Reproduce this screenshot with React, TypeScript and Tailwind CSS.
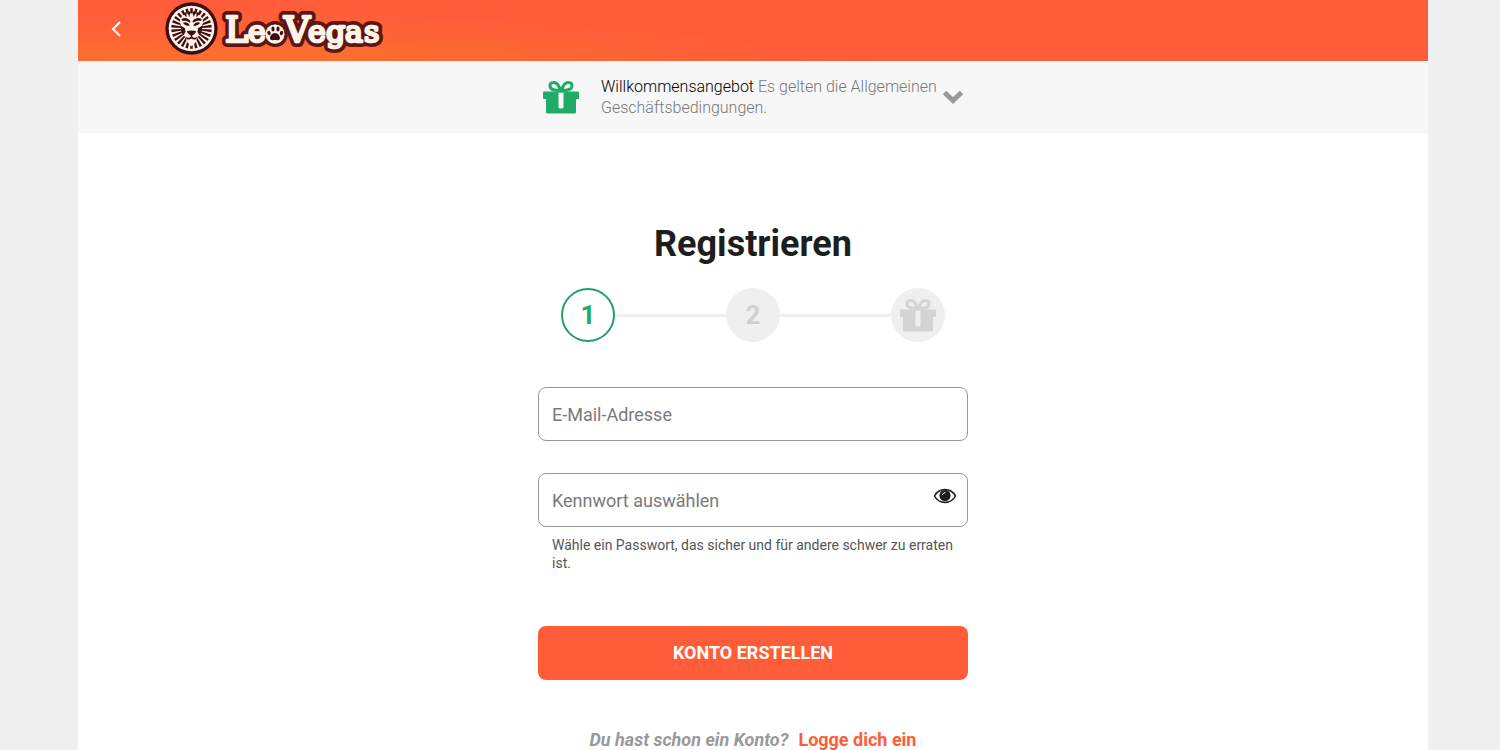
import { useState } from "react";

const RAYS = Array.from({ length: 26 }, (_, i) => (i * 360) / 26);

function LionBadge() {
  return (
    <svg viewBox="0 0 160 160" className="size-[53px] shrink-0" aria-hidden="true">
      <circle cx="80" cy="80" r="79" fill="#3f0d10" />
      <circle cx="80" cy="80" r="69" fill="#fff4ea" />
      {RAYS.map((deg) => (
        <path key={deg} d="M76 19 L84 19 L82.5 50 L77.5 50 Z" fill="#3f0d10" transform={`rotate(${deg} 80 80)`} />
      ))}
      <path
        d="M80 34 C88 37 97 34 104 39 C112 44 116 53 114 65 L107 84 C110 93 107 101 98 106 L92 122 L80 134 L68 122 L62 106 C53 101 50 93 53 84 L46 65 C44 53 48 44 56 39 C63 34 72 37 80 34 Z"
        fill="#fff4ea"
      />
      <g fill="#3f0d10">
        <path d="M50 51 C60 46 70 49 77 58 L75 63 C67 57 60 56 51 57 Z" />
        <path d="M110 51 C100 46 90 49 83 58 L85 63 C93 57 100 56 109 57 Z" />
        <path d="M54 63 C61 59 70 62 75 71 C67 73 59 71 54 63 Z" />
        <path d="M106 63 C99 59 90 62 85 71 C93 73 101 71 106 63 Z" />
        <path d="M66 88 C75 85 85 85 94 88 C93 94 87 98 80 102 C73 98 67 94 66 88 Z" />
        <path d="M78 98 H82 V104 C86 110 93 109 99 104 C97 114 86 116 80 110 C74 116 63 114 61 104 C67 109 74 110 78 104 Z" />
        <path d="M46 70 L60 79 L62 90 L56 101 L50 92 Z" />
        <path d="M114 70 L100 79 L98 90 L104 101 L110 92 Z" />
        <path d="M67 29 L73 46 L78 29 Z M93 29 L87 46 L82 29 Z M54 34 L65 47 L65 30 Z M106 34 L95 47 L95 30 Z" />
      </g>
    </svg>
  );
}

function Wordmark() {
  const letters = (
    <>
      <tspan x="5" fontSize="35">L</tspan>
      <tspan x="28 46">eo</tspan>
      <tspan x="64" fontSize="36">V</tspan>
      <tspan x="88 106 125 144">egas</tspan>
    </>
  );
  return (
    <svg viewBox="0 0 166 52" className="h-[52px] w-[166px] shrink-0" role="img" aria-label="LeoVegas">
      <g fontFamily="'DejaVu Serif', serif" fontSize="30" strokeLinejoin="round">
        <text y="36" fill="#5c1712" stroke="#5c1712" strokeWidth="10">
          {letters}
        </text>
        <text y="36" fill="#fff4ea" stroke="#fff4ea" strokeWidth="2.600" aria-hidden="true">
          {letters}
        </text>
      </g>
      <circle cx="55" cy="28" r="9.500" fill="#fff4ea" />
      <g fill="#3f0d10">
        <ellipse cx="49" cy="27" rx="1.600" ry="2.200" transform="rotate(-25 49 27)" />
        <ellipse cx="53" cy="23" rx="1.600" ry="2.400" />
        <ellipse cx="58" cy="23" rx="1.600" ry="2.400" />
        <ellipse cx="61.500" cy="27" rx="1.600" ry="2.200" transform="rotate(25 61.5 27)" />
        <path d="M55 27 C58 27 60 30 60 32 C60 35 57 34 55 34 C53 34 50 35 50 32 C50 30 52 27 55 27 Z" />
      </g>
    </svg>
  );
}

function GiftIcon({ className = "" }: { className?: string }) {
  return (
    <svg viewBox="0 0 36 33" className={`h-[33px] w-9 ${className}`} aria-hidden="true">
      <path
        d="M17.500 10 C16 4 13 1 10 1.500 C6 2 6 7 10 8.500 C12.500 9.500 15 9 17.500 10 Z M18.500 10 C20 4 23 1 26 1.500 C30 2 30 7 26 8.500 C23.500 9.500 21 9 18.500 10 Z"
        fill="none"
        stroke="currentColor"
        strokeWidth="3"
        strokeLinejoin="round"
      />
      <path
        fillRule="evenodd"
        d="M1 10.500 H35 Q36 10.500 36 11.500 V17 Q36 18 35 18 H33 V31 Q33 32.500 31.500 32.500 H4.500 Q3 32.500 3 31 V18 H1 Q0 18 0 17 V11.500 Q0 10.500 1 10.500 Z M15.500 11.500 V26 Q15.500 27.500 17 27.500 H19 Q20.500 27.500 20.500 26 V11.500 Z"
        fill="currentColor"
      />
    </svg>
  );
}

function EyeIcon() {
  return (
    <svg viewBox="0 0 24 16" className="h-4 w-6" aria-hidden="true">
      <path d="M1.500 8 C6 -0.500 18 -0.500 22.500 8 C18 16.500 6 16.500 1.500 8 Z" fill="none" stroke="#1e1e1e" strokeWidth="1.600" />
      <circle cx="12" cy="7.500" r="5.600" fill="#1e1e1e" />
      <path d="M9.500 6.500 A3 3 0 0 1 12 4.500" fill="none" stroke="#ffffff" strokeWidth="1" strokeLinecap="round" />
    </svg>
  );
}

function Header() {
  return (
    <header className="flex h-[61px] items-start bg-[#ff5c3a] bg-[radial-gradient(ellipse_700px_80px_at_150px_90px,#fb7a2a,#ff5c3a)] pl-7">
      <button type="button" aria-label="Zurück" className="mt-[17px] flex h-6 w-5 items-center justify-center text-white">
        <svg viewBox="0 0 10 16" className="h-4 w-[10px]" fill="none" stroke="currentColor" strokeWidth="2">
          <path d="M9 1 L2 8 L9 15" />
        </svg>
      </button>
      <a href="#" className="mt-[2px] ml-[39px] flex items-start gap-[2px]">
        <LionBadge />
        <span className="mt-1">
          <Wordmark />
        </span>
      </a>
    </header>
  );
}

function OfferBanner() {
  return (
    <section className="flex h-[72px] justify-center bg-[#f7f7f7]">
      <div className="flex w-[430px] items-center pl-[5px]">
        <GiftIcon className="shrink-0 text-[#20ab66]" />
        <p className="ml-[22px] flex-1 text-base leading-[21px] font-light text-[#777777]">
          <span className="text-black">Willkommensangebot</span> Es gelten die Allgemeinen
          Geschäftsbedingungen.
        </p>
        <button type="button" aria-label="Details anzeigen" className="mr-1 text-[#999999]">
          <svg viewBox="0 0 22 14" className="h-[14px] w-[22px]" fill="none" stroke="currentColor" strokeWidth="5">
            <path d="M2.500 2.500 L11 10.500 L19.500 2.500" />
          </svg>
        </button>
      </div>
    </section>
  );
}

function Steps() {
  return (
    <ol className="mt-[22px] flex items-center px-[23px] text-[26px] font-bold">
      <li className="flex size-[54px] items-center justify-center rounded-full border-2 border-[#20a068] text-[#20ab66]">
        1
      </li>
      <li className="h-[3px] flex-1 bg-[#efefef]" aria-hidden="true" />
      <li className="flex size-[54px] items-center justify-center rounded-full bg-[#efefef] text-[#d0d0d0]">2</li>
      <li className="h-[3px] flex-1 bg-[#efefef]" aria-hidden="true" />
      <li className="flex size-[54px] items-center justify-center rounded-full bg-[#efefef] text-[#d4d4d4]">
        <GiftIcon />
      </li>
    </ol>
  );
}

const inputClass =
  "h-[54px] w-full rounded-lg border border-[#999999] bg-white px-[13px] text-lg text-[#1e1e1e] outline-none placeholder:text-[#7a7a7a] focus:border-[#20ab66]";

export default function App() {
  const [email, setEmail] = useState("");
  const [password, setPassword] = useState("");
  const [visible, setVisible] = useState(false);

  return (
    <div className="h-screen overflow-hidden bg-[#f0f0f0] pr-[72px] pl-[78px] font-[Roboto,sans-serif]">
      <div className="min-h-screen bg-white">
        <Header />
        <OfferBanner />

        <main className="mx-auto w-[430px] pt-[90px]">
          <h1 className="text-center text-4xl leading-[43px] font-bold text-[#1e1e1e]">Registrieren</h1>
          <Steps />

          <form className="mt-[45px]" onSubmit={(e) => e.preventDefault()}>
            <input
              type="email"
              aria-label="E-Mail-Adresse"
              placeholder="E-Mail-Adresse"
              value={email}
              onChange={(e) => setEmail(e.target.value)}
              className={inputClass}
            />
            <div className="relative mt-8">
              <input
                type={visible ? "text" : "password"}
                aria-label="Kennwort auswählen"
                aria-describedby="password-hint"
                placeholder="Kennwort auswählen"
                value={password}
                onChange={(e) => setPassword(e.target.value)}
                className={inputClass}
              />
              <button
                type="button"
                aria-label="Kennwort anzeigen"
                onClick={() => setVisible(!visible)}
                className="absolute top-[15px] right-[11px]"
              >
                <EyeIcon />
              </button>
            </div>
            <p id="password-hint" className="mt-[9px] px-[14px] text-sm leading-[18px] text-[#555555]">
              Wähle ein Passwort, das sicher und für andere schwer zu erraten ist.
            </p>
            <button
              type="submit"
              className="mt-[54px] h-[54px] w-full rounded-lg bg-[#ff5c3a] text-lg font-bold text-white uppercase"
            >
              Konto erstellen
            </button>
          </form>

          <p className="mt-[46px] text-center text-lg font-bold text-[#999999]">
            <em>Du hast schon ein Konto?</em>
            <a href="#" className="ml-[10px] text-[#ff5c3a]">
              Logge dich ein
            </a>
          </p>
        </main>
      </div>
    </div>
  );
}
